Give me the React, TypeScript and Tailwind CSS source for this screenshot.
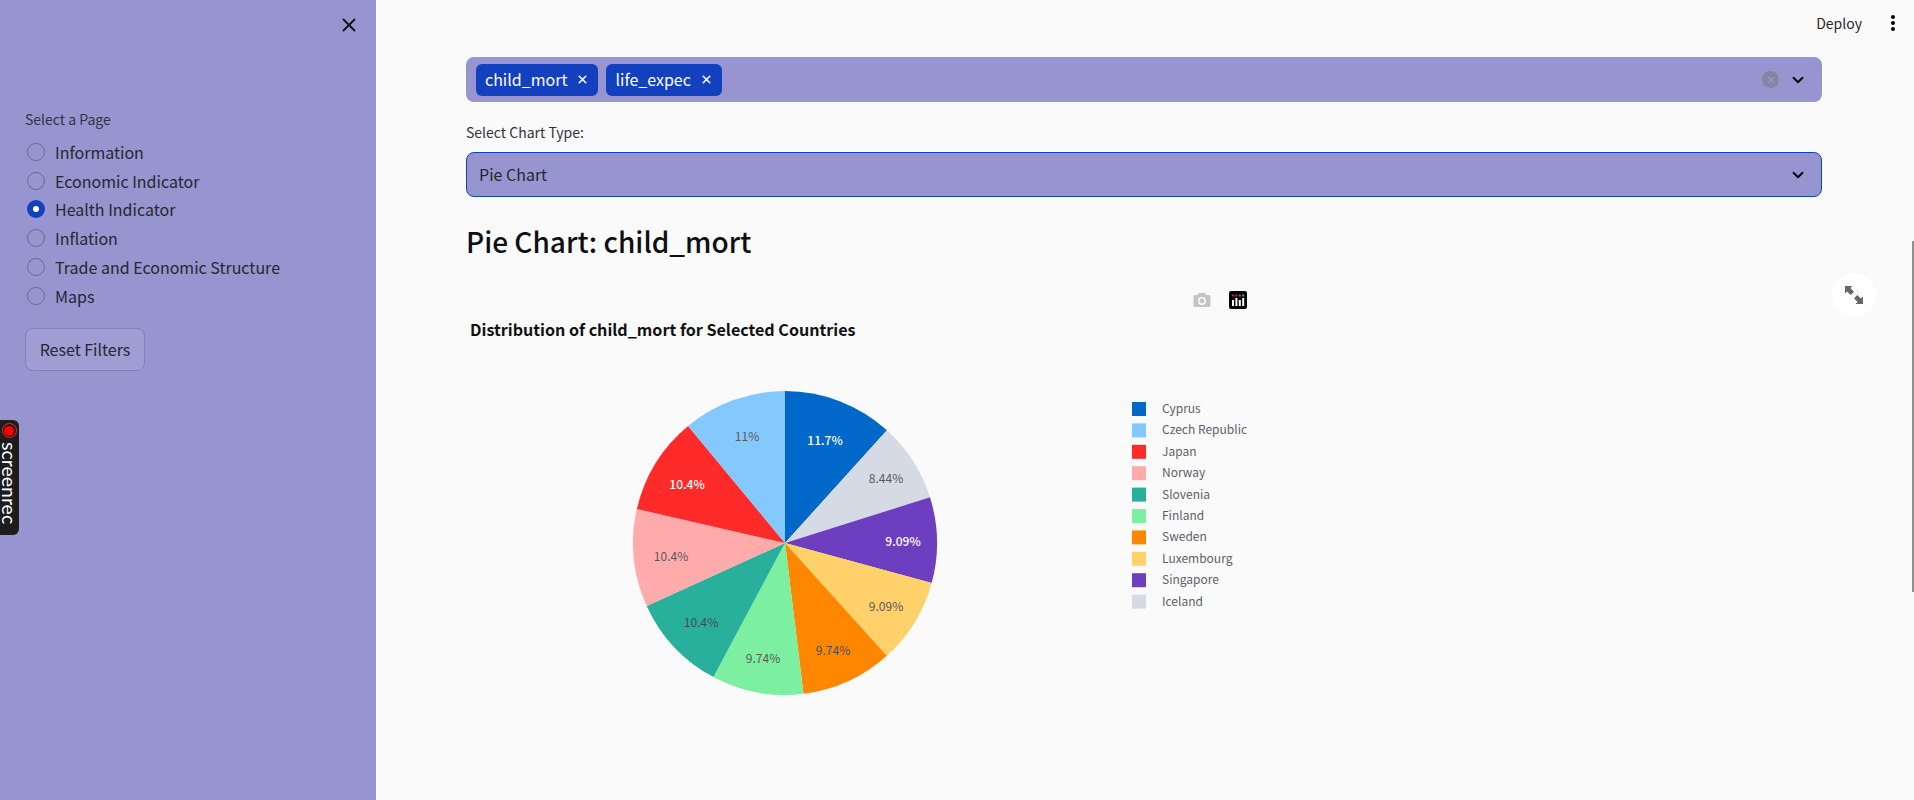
import React from 'react';
import { ChevronDown, X } from 'lucide-react';

const pages = ['Information', 'Economic Indicator', 'Health Indicator', 'Inflation', 'Trade and Economic Structure', 'Maps'];

// dx/dy: label offset from the pie centre, plotly doesn't place them on a fixed radius
const slices = [
  { name: 'Cyprus', pct: 11.7, label: '11.7%', color: '#0068c9', text: '#ffffff', bold: true, dx: 40, dy: -103 },
  { name: 'Iceland', pct: 8.44, label: '8.44%', color: '#d5dae5', text: '#5a5a5a', dx: 101, dy: -65 },
  { name: 'Singapore', pct: 9.09, label: '9.09%', color: '#6d3fc0', text: '#ffffff', bold: true, dx: 118, dy: -2 },
  { name: 'Luxembourg', pct: 9.09, label: '9.09%', color: '#ffd16a', text: '#5a5a5a', dx: 101, dy: 63 },
  { name: 'Sweden', pct: 9.74, label: '9.74%', color: '#ff8700', text: '#4f4f4f', dx: 48, dy: 107 },
  { name: 'Finland', pct: 9.74, label: '9.74%', color: '#7defa1', text: '#5a5a5a', dx: -22, dy: 115 },
  { name: 'Slovenia', pct: 10.4, label: '10.4%', color: '#29b09d', text: '#3f4f4f', dx: -84, dy: 79 },
  { name: 'Norway', pct: 10.4, label: '10.4%', color: '#ffabab', text: '#5a5a5a', dx: -114, dy: 13 },
  { name: 'Japan', pct: 10.4, label: '10.4%', color: '#ff2b2b', text: '#ffffff', bold: true, dx: -98, dy: -59 },
  { name: 'Czech Republic', pct: 11, label: '11%', color: '#83c9ff', text: '#5a5a5a', dx: -38, dy: -107 },
];

const legendOrder = ['Cyprus', 'Czech Republic', 'Japan', 'Norway', 'Slovenia', 'Finland', 'Sweden', 'Luxembourg', 'Singapore', 'Iceland'];

const FONT = "font-['Noto_Sans_CJK_SC',sans-serif]";

function PieChart() {
  const cx = 319;
  const cy = 172;
  const r = 152;
  const total = slices.reduce((s, x) => s + x.pct, 0);
  let acc = 0;
  const point = (f: number) => {
    const a = f * Math.PI * 2;
    return [cx + r * Math.sin(a), cy - r * Math.cos(a)];
  };
  return (
    <svg width="900" height="340" className="block">
      {slices.map((s) => {
        const start = acc / total;
        acc += s.pct;
        const end = acc / total;
        const [x1, y1] = point(start);
        const [x2, y2] = point(end);
        return (
          <g key={s.name}>
            <path d={`M${cx} ${cy}L${x1} ${y1}A${r} ${r} 0 0 1 ${x2} ${y2}Z`} fill={s.color} />
            <text x={cx + s.dx} y={cy + s.dy + 5} textAnchor="middle" fontSize="12" fontWeight={s.bold ? 500 : 400} fill={s.text}>
              {s.label}
            </text>
          </g>
        );
      })}
      {legendOrder.map((name, i) => {
        const s = slices.find((x) => x.name === name)!;
        const y = 38 + i * 21.4;
        return (
          <g key={name}>
            <rect x={666} y={y - 7} width={14} height={14} fill={s.color} />
            <text x={696} y={y + 4} fontSize="12" fill="#5a5f6b">
              {name}
            </text>
          </g>
        );
      })}
    </svg>
  );
}

export default function App() {
  return (
    <div className={`relative flex h-[800px] overflow-hidden bg-[#fafafa] text-[#262730] ${FONT}`}>
      {/* Sidebar */}
      <aside className="flex w-[376px] shrink-0 flex-col bg-[#9795cf] pl-[25px]">
        <div className="flex justify-end pr-[16px] pt-[14px]">
          <X className="h-[22px] w-[22px] text-[#111]" strokeWidth={2} />
        </div>
        <p className="mt-[73px] text-[14px] leading-[20px] text-[#31333f]">Select a Page</p>
        <div className="mt-[8.5px] flex flex-col">
          {pages.map((page) => {
            const active = page === 'Health Indicator';
            return (
              <div key={page} className="flex h-[28.8px] items-center">
                {active ? (
                  <span className="ml-[2px] flex h-[18px] w-[18px] items-center justify-center rounded-full bg-[#1240bf]">
                    <span className="h-[6px] w-[6px] rounded-full bg-white" />
                  </span>
                ) : (
                  <span className="ml-[2px] h-[18px] w-[18px] rounded-full border border-[#6a6a8c]" />
                )}
                <span className="ml-[10px] text-[16px] leading-[24px]">{page}</span>
              </div>
            );
          })}
        </div>
        <button className="mt-[17.5px] h-[43px] w-[120px] rounded-lg border border-[#8280b8] bg-[#9f9dd3] text-[16px] leading-[24px]">
          Reset Filters
        </button>
      </aside>

      {/* Main */}
      <main className="min-w-0 flex-1">
        <div className="flex h-[46px] items-center justify-end pr-[19px]">
          <span className="text-[14px] text-[#262730]">Deploy</span>
          <span className="ml-[29px] flex flex-col gap-[2px]">
            <span className="h-1 w-1 rounded-full bg-black" />
            <span className="h-1 w-1 rounded-full bg-black" />
            <span className="h-1 w-1 rounded-full bg-black" />
          </span>
        </div>

        <div className="ml-[90px] w-[1356px]">
          <div className="mt-[11px] flex h-[45px] items-center rounded-lg bg-[#9795cf] pl-[10px] pr-[15px]">
            {['child_mort', 'life_expec'].map((tag) => (
              <span key={tag} className="mr-[8px] flex h-[32px] items-center rounded-md bg-[#1240bf] pb-[2px] pl-[9px] pr-[9px] text-[16px] leading-[24px] text-white">
                {tag}
                <X className="ml-[9px] mt-[2px] h-[13px] w-[13px]" strokeWidth={3} />
              </span>
            ))}
            <span className="ml-auto flex h-[17px] w-[17px] items-center justify-center rounded-full bg-[#85859f]">
              <X className="h-[10px] w-[10px] text-[#9795cf]" strokeWidth={3.5} />
            </span>
            <ChevronDown className="ml-[10px] h-[18px] w-[18px] text-black" strokeWidth={2.5} />
          </div>

          <p className="mt-[20px] text-[14px] leading-[20px] text-[#31333f]">Select Chart Type:</p>
          <div className="mt-[10px] flex h-[45px] items-center justify-between rounded-lg border border-[#1240bf] bg-[#9795cf] pl-[12px] pr-[14px]">
            <span className="pb-[1px] text-[16px] leading-[24px]">Pie Chart</span>
            <ChevronDown className="h-[18px] w-[18px] text-black" strokeWidth={2.5} />
          </div>

          <h2 className="mt-[22px] text-[28px] font-medium leading-[44px] text-[#0e0f14]">Pie Chart: child_mort</h2>

          <div className="relative mt-[29px]">
            <div className="absolute left-[727px] top-[-1px] flex items-center gap-[18px]">
              <svg width="18" height="16" viewBox="0 0 18 16">
                <path fillRule="evenodd" fill="#c4c4c4" d="M6 1h6l1.2 2H16a1.5 1.5 0 0 1 1.5 1.5v9A1.5 1.5 0 0 1 16 15H2a1.5 1.5 0 0 1-1.5-1.5v-9A1.5 1.5 0 0 1 2 3h2.8zM9 5a4 4 0 1 0 0 8 4 4 0 0 0 0-8zm0 1.6a2.4 2.4 0 1 1 0 4.8 2.4 2.4 0 0 1 0-4.8z" />
              </svg>
              <svg width="18" height="18" viewBox="0 0 18 18">
                <rect width="18" height="18" rx="2" fill="#000" />
                <rect x="3" y="3.5" width="2" height="2" fill="#e0115f" />
                <rect x="6.4" y="3.5" width="2" height="2" fill="#e0115f" />
                <rect x="9.8" y="3.5" width="2" height="2" fill="#7a5fb0" />
                <rect x="13.2" y="3.5" width="2" height="2" fill="#33b5c8" />
                <rect x="3" y="9" width="2" height="6" fill="#fff" />
                <rect x="6.4" y="7" width="2" height="8" fill="#fff" />
                <rect x="9.8" y="9" width="2" height="6" fill="#fff" />
                <rect x="13.2" y="7" width="2" height="8" fill="#fff" />
              </svg>
            </div>
            <p className="absolute left-[4px] top-[25px] text-[16.1px] font-bold leading-[24px] text-[#111]">
              Distribution of child_mort for Selected Countries
            </p>
            <div className="pt-[79px]">
              <PieChart />
            </div>
          </div>
        </div>
      </main>

      {/* Overlays */}
      <span className="absolute left-[1832px] top-[273px] flex h-[44px] w-[44px] items-center justify-center rounded-full bg-white">
        <svg width="18" height="18" viewBox="0 0 18 18">
          <path fill="#666" d="M0 0h7.5L5.4 2.1 9 5.7 5.7 9 2.1 5.4 0 7.5zM18 18h-7.5l2.1-2.1L9 12.3 12.3 9l3.6 3.6L18 10.5z" />
        </svg>
      </span>
      <div className="absolute right-0 top-[241px] h-[351px] w-[2px] bg-[#8f8f8f]" />
      <div className="absolute left-0 top-[420px] flex h-[115px] w-[19px] flex-col items-center rounded-r-md bg-[#1d1d1d] pr-[1px] pt-[3px]">
        <span className="flex h-[15px] w-[15px] items-center justify-center rounded-full border border-[#ff2020]">
          <span className="h-[10px] w-[10px] rounded-full bg-[#ff0000]" />
        </span>
        <span className="mt-[4px] text-[19.5px] leading-[18px] text-white [writing-mode:vertical-rl] font-['Lato',sans-serif]">screenrec</span>
      </div>
    </div>
  );
}
